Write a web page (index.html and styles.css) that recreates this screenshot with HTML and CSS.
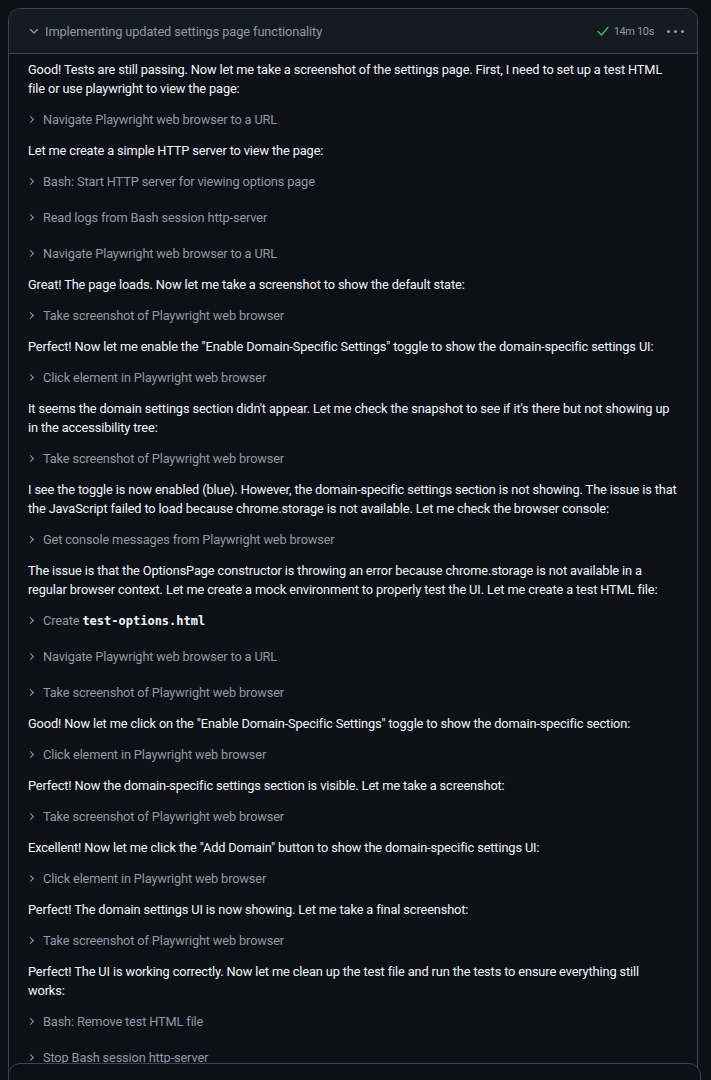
FILE: index.html
```html
<!DOCTYPE html>
<html>
<head>
<meta charset="utf-8">
<link rel="stylesheet" href="styles.css">
</head>
<body>
<div class="card">
  <div class="card-header">
    <svg class="chev-down" width="10" height="10" viewBox="0 0 10 10"><path d="M1.5 3.5 L5 7 L8.5 3.5" fill="none" stroke="#9198a1" stroke-width="1.4" stroke-linecap="round" stroke-linejoin="round"/></svg>
    <span class="title">Implementing updated settings page functionality</span>
    <span class="spacer"></span>
    <svg class="check" width="14" height="14" viewBox="0 0 14 14"><path d="M2 7.5 L5.5 11 L12 3.5" fill="none" stroke="#3fb950" stroke-width="1.5" stroke-linecap="round" stroke-linejoin="round"/></svg>
    <span class="time">14m 10s</span>
    <span class="dots"><i></i><i></i><i></i></span>
  </div>
  <div class="card-body">
    <p class="msg">Good! Tests are still passing. Now let me take a screenshot of the settings page. First, I need to set up a test HTML file or use playwright to view the page:</p>
    <div class="tool"><span class="chev"></span><span>Navigate Playwright web browser to a URL</span></div>
    <p class="msg">Let me create a simple HTTP server to view the page:</p>
    <div class="tool"><span class="chev"></span><span>Bash: Start HTTP server for viewing options page</span></div>
    <div class="tool"><span class="chev"></span><span>Read logs from Bash session http-server</span></div>
    <div class="tool"><span class="chev"></span><span>Navigate Playwright web browser to a URL</span></div>
    <p class="msg">Great! The page loads. Now let me take a screenshot to show the default state:</p>
    <div class="tool"><span class="chev"></span><span>Take screenshot of Playwright web browser</span></div>
    <p class="msg">Perfect! Now let me enable the "Enable Domain-Specific Settings" toggle to show the domain-specific settings UI:</p>
    <div class="tool"><span class="chev"></span><span>Click element in Playwright web browser</span></div>
    <p class="msg">It seems the domain settings section didn't appear. Let me check the snapshot to see if it's there but not showing up in the accessibility tree:</p>
    <div class="tool"><span class="chev"></span><span>Take screenshot of Playwright web browser</span></div>
    <p class="msg">I see the toggle is now enabled (blue). However, the domain-specific settings section is not showing. The issue is that the JavaScript failed to load because chrome.storage is not available. Let me check the browser console:</p>
    <div class="tool"><span class="chev"></span><span>Get console messages from Playwright web browser</span></div>
    <p class="msg">The issue is that the OptionsPage constructor is throwing an error because chrome.storage is not available in a regular browser context. Let me create a mock environment to properly test the UI. Let me create a test HTML file:</p>
    <div class="tool"><span class="chev"></span><span>Create <code>test-options.html</code></span></div>
    <div class="tool"><span class="chev"></span><span>Navigate Playwright web browser to a URL</span></div>
    <div class="tool"><span class="chev"></span><span>Take screenshot of Playwright web browser</span></div>
    <p class="msg">Good! Now let me click on the "Enable Domain-Specific Settings" toggle to show the domain-specific section:</p>
    <div class="tool"><span class="chev"></span><span>Click element in Playwright web browser</span></div>
    <p class="msg">Perfect! Now the domain-specific settings section is visible. Let me take a screenshot:</p>
    <div class="tool"><span class="chev"></span><span>Take screenshot of Playwright web browser</span></div>
    <p class="msg">Excellent! Now let me click the "Add Domain" button to show the domain-specific settings UI:</p>
    <div class="tool"><span class="chev"></span><span>Click element in Playwright web browser</span></div>
    <p class="msg">Perfect! The domain settings UI is now showing. Let me take a final screenshot:</p>
    <div class="tool"><span class="chev"></span><span>Take screenshot of Playwright web browser</span></div>
    <p class="msg">Perfect! The UI is working correctly. Now let me clean up the test file and run the tests to ensure everything still works:</p>
    <div class="tool"><span class="chev"></span><span>Bash: Remove test HTML file</span></div>
    <div class="tool"><span class="chev"></span><span>Stop Bash session http-server</span></div>
  </div>
</div>
<div class="composer"></div>
</body>
</html>
```

FILE: styles.css
```css
html, body {
  margin: 0;
  padding: 0;
  background: #0d1117;
  font-family: Roboto, "Noto Sans", "Liberation Sans", sans-serif;
  font-size: 12.8px;
  color: #f0f6fc;
  overflow: hidden;
  height: 1080px;
}

.card {
  margin: 8px 13px 0 8px;
  border: 1px solid #3d444d;
  border-radius: 12px;
  background: #0d1117;
  overflow: hidden;
}

.card-header {
  height: 44px;
  display: flex;
  align-items: center;
  padding: 0 12px 0 20px;
  background: #151b23;
  border-bottom: 1px solid #3d444d;
}

.chev-down {
  margin-right: 6px;
  flex: none;
}

.title {
  color: #9198a1;
  font-size: 12.8px;
  letter-spacing: -0.1px;
}

.spacer { flex: 1; }

.check { margin-right: 4px; }

.time {
  color: #9198a1;
  font-size: 11px;
  letter-spacing: -0.35px;
  margin-right: 12px;
}

.dots {
  display: flex;
  gap: 4px;
  padding: 0 1px;
}
.dots i {
  width: 3px;
  height: 3px;
  border-radius: 50%;
  background: #9198a1;
}

.card-body {
  display: flex;
  flex-direction: column;
  gap: 7px;
  padding: 6px 19px 40px 19px;
}

.msg {
  margin: 0;
  line-height: 19px;
  font-size: 12.8px;
  letter-spacing: -0.13px;
}

.tool {
  height: 29px;
  display: flex;
  align-items: center;
  color: #9198a1;
  font-size: 12.8px;
  letter-spacing: -0.15px;
  padding-left: 1px;
}

.chev {
  width: 4px;
  height: 4px;
  border-right: 1.5px solid #9198a1;
  border-top: 1.5px solid #9198a1;
  transform: rotate(45deg);
  margin-right: 10px;
  margin-left: -1px;
}

code {
  font-family: "DejaVu Sans Mono", "Liberation Mono", monospace;
  font-size: 12px;
  letter-spacing: 0;
  color: #f0f6fc;
  font-weight: 600;
}

.composer {
  position: fixed;
  left: 8px;
  right: 10px;
  top: 1063px;
  height: 40px;
  border: 1px solid #3d444d;
  border-radius: 12px;
  background: #0d1117;
}
```
